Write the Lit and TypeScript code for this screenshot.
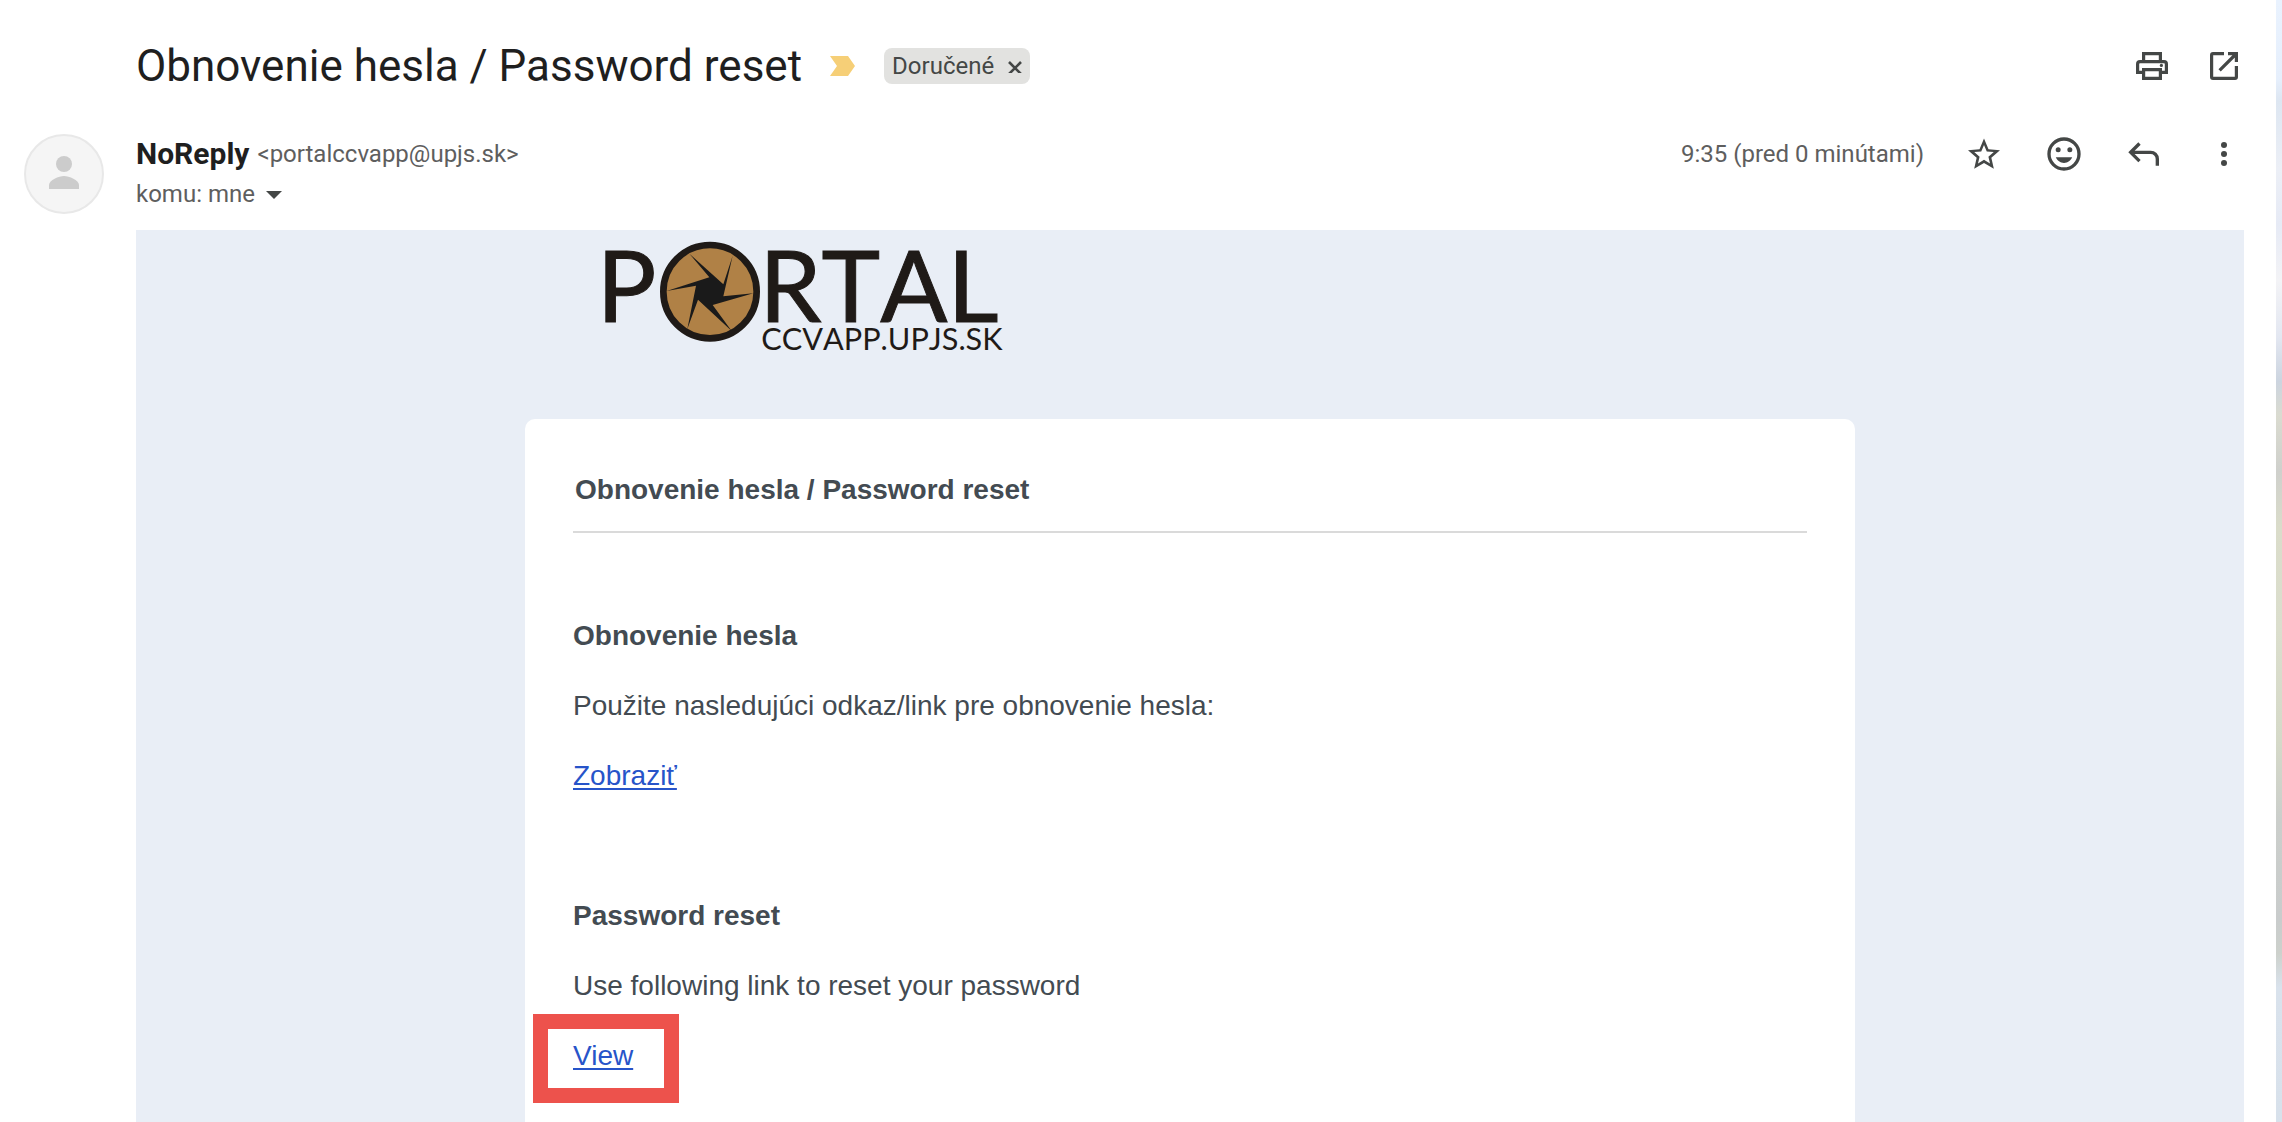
import { LitElement, html, css, svg } from "lit";
import { customElement } from "lit/decorators.js";

const icon = (body: unknown, box = 24) => html`
  <svg class="icon" viewBox="0 0 ${box} ${box}" aria-hidden="true">${body}</svg>
`;

const PRINT = svg`<g fill="none" stroke="currentColor" stroke-width="1.6"><path d="M5.8 7V3.8h8.4V7"/><path d="M5 13.2H2.8V9c0-.7.5-1.2 1.2-1.2h12c.7 0 1.2.5 1.2 1.2v4.2H15"/><path d="M5.8 11.8h8.4v4.4H5.8z"/></g><circle cx="14.7" cy="9.7" r=".8" fill="currentColor"/>`;
const OPEN = svg`<g fill="none" stroke="currentColor" stroke-width="1.6"><path d="M10 3.8H4.5a.7.7 0 0 0-.7.7v11c0 .4.3.7.7.7h11c.4 0 .7-.3.7-.7V10"/><path d="M12 3.8h4.2V8M16 4l-8.2 8.2"/></g>`;
const STAR = svg`<path fill="currentColor" d="M21.6 9.7l-6.9-.6L12 2.7 9.3 9.1l-6.9.6 5.2 4.5-1.5 6.7 5.9-3.5 5.9 3.5-1.5-6.7zM12 15.5l-3.6 2.2.95-4.1-3.2-2.8 4.2-.35L12 6.6l1.65 3.85 4.2.35-3.2 2.8.95 4.1z"/>`;
const SMILE = svg`<circle cx="12" cy="12" r="9" fill="none" stroke="currentColor" stroke-width="2"/><circle cx="8.5" cy="9.5" r="1.5" fill="currentColor"/><circle cx="15.5" cy="9.5" r="1.5" fill="currentColor"/><path fill="currentColor" d="M7.1 14h9.8c-.8 2-2.7 3.4-4.9 3.4S7.9 16 7.1 14z"/>`;
const REPLY = svg`<path fill="none" stroke="currentColor" stroke-width="2" d="M9.3 5.7 4 11l5.3 5.3M4.2 11H16c2.2 0 4 1.8 4 4v4"/>`;
const MORE = svg`<g fill="currentColor"><circle cx="12" cy="6.6" r="1.8"/><circle cx="12" cy="12" r="1.8"/><circle cx="12" cy="17.4" r="1.8"/></g>`;

@customElement("portal-logo")
export class PortalLogo extends LitElement {
  static styles = css`
    :host { display: block; }
    .logo { display: block; width: 406px; height: 117px; overflow: visible; }
    .word, .domain { font-family: Lato, sans-serif; font-kerning: none; fill: #1f1a17; }
    .word { font-size: 298px; stroke: #1f1a17; stroke-width: 3px; }
    .domain { font-size: 92px; }
  `;
  render() {
    return html`
      <svg class="logo" viewBox="60 39 1218 351" role="img" aria-label="PORTAL CCVAPP.UPJS.SK">
        <text class="word" x="50" y="291">P</text>
        <circle cx="390" cy="200" r="140" fill="#b08146" stroke="#1f1a17" stroke-width="20" />
        <polygon
          fill="#1a1a1a"
          points="328,86 430,178 458,92 430,214 520,205 398,240 455,318 354,224 322,312 348,182 260,198 388,157"
        />
        <text class="word" x="538" y="291">RTAL</text>
        <text class="domain" x="544" y="376">CCVAPP.UPJS.SK</text>
      </svg>
    `;
  }
}

@customElement("app-root")
export class AppRoot extends LitElement {
  static styles = css`
    :host {
      display: flex;
      height: 100vh;
      overflow: hidden;
      background: #fff;
      color: #1f1f1f;
      font-family: Roboto, "Liberation Sans", sans-serif;
    }
    * { box-sizing: border-box; }
    button {
      display: inline-flex;
      align-items: center;
      justify-content: center;
      padding: 0;
      border: 0;
      background: none;
      color: #444746;
      font: inherit;
      cursor: pointer;
    }
    .main {
      flex: 1;
      min-width: 0;
      display: flex;
      flex-direction: column;
      padding: 0 32px 0 24px;
    }
    .wallpaper {
      flex: 0 0 6px;
      background: linear-gradient(
        #e9f2fe 0%, #e6effc 7%, #dde6f1 9%, #eceff6 15%, #e6eaf5 20%, #f3f3f6 25%,
        #e3e7f1 30%, #ccd4df 34%, #dadbd0 37%, #cfd0cc 42%, #dadcca 47%, #dbdecd 56%,
        #d5d9c8 66%, #cbcecb 73%, #c9cccc 82%, #cdd1cc 85%, #d9e2ec 88%, #d8e1eb 100%
      );
    }
    .subject {
      display: flex;
      align-items: center;
      height: 132px;
      padding-left: 112px;
    }
    .subject-text { margin: 0; font-size: 44px; line-height: 56px; font-weight: 400; }
    .important { width: 26px; height: 20px; margin: 0 28px; color: #f6cf77; }
    .important-mark { width: 26px; height: 20px; }
    .label {
      display: flex;
      align-items: center;
      gap: 14px;
      height: 36px;
      padding: 0 8px;
      border-radius: 8px;
      background: #e2e2e0;
      color: #444746;
      font-size: 24px;
      line-height: 36px;
    }
    .label-close { width: 14px; height: 14px; }
    .label-x { width: 14px; height: 14px; }
    .page-tools { display: flex; gap: 32px; margin-left: auto; }
    .tool { width: 40px; height: 40px; }
    .icon { width: 40px; height: 40px; display: block; }
    .meta { display: flex; gap: 32px; padding: 2px 0 16px; }
    .avatar { width: 80px; height: 80px; flex: none; }
    .people { flex: 1; min-width: 0; font-size: 24px; line-height: 40px; color: #5e5e5e; }
    .line { display: flex; align-items: center; height: 40px; }
    .sender { margin: 0 8px 0 0; font-size: 30px; line-height: 40px; font-weight: 700; color: #1f1f1f; }
    .time { margin-left: auto; }
    .actions { display: flex; gap: 40px; margin-left: 40px; }
    .details { width: 40px; height: 40px; }
    .body {
      flex: 1;
      min-height: 0;
      margin-left: 112px;
      background: #e9eef6;
      color: #434b52;
      font-family: "Liberation Sans", Arial, sans-serif;
      font-size: 28px;
      line-height: 42px;
    }
    .letter {
      display: flex;
      flex-direction: column;
      height: 100%;
      width: 100%;
      max-width: 1330px;
      margin: 0 auto;
    }
    .brand { padding: 8px 0 64px 75px; }
    .card { flex: 1; padding: 48px 48px 0; border-radius: 10px 10px 0 0; background: #fff; }
    .card-title {
      margin: 0;
      padding: 2px 2px 20px;
      border-bottom: 2px solid #dadada;
      font-size: 28px;
      line-height: 42px;
      font-weight: 700;
    }
    .section { padding: 82px 0 16px; }
    .section + .section { padding-top: 54px; }
    .section-title, .text { margin: 0 0 28px; font-size: 28px; line-height: 42px; }
    .section-title { font-weight: 700; }
    .link {
      color: #2754c9;
      text-decoration: underline;
      text-decoration-thickness: 2px;
      text-underline-offset: 3px;
    }
    .marked { position: relative; }
    .marker {
      position: absolute;
      inset: -26px -46px -32px -40px;
      border: 15px solid #ed524c;
      pointer-events: none;
    }
  `;

  render() {
    return html`
      <main class="main">
        <header class="subject">
          <h1 class="subject-text">Obnovenie hesla / Password reset</h1>
          <button class="important" aria-label="Dôležité">
            <svg class="important-mark" viewBox="0 0 26 20"><path fill="currentColor" d="M0 0h18l7 10-7 10H0l7-10z" /></svg>
          </button>
          <div class="label">
            <span>Doručené</span>
            <button class="label-close" aria-label="Odstrániť štítok">
              <svg class="label-x" viewBox="0 0 14 14"><path d="M1 3l12 12M13 3L1 15" stroke="currentColor" stroke-width="2.6" /></svg>
            </button>
          </div>
          <div class="page-tools">
            <button class="tool" aria-label="Tlačiť">${icon(PRINT, 20)}</button>
            <button class="tool" aria-label="V novom okne">${icon(OPEN, 20)}</button>
          </div>
        </header>

        <section class="meta">
          <svg class="avatar" viewBox="0 0 80 80" aria-hidden="true">
            <circle cx="40" cy="40" r="39" fill="#f5f5f5" stroke="#e8e8e8" stroke-width="2" />
            <circle cx="40" cy="30" r="8" fill="#ccc" />
            <path fill="#ccc" d="M25 55v-4c0-5 10-9 15-9s15 4 15 9v4z" />
          </svg>
          <div class="people">
            <div class="line">
              <h2 class="sender">NoReply</h2>
              <span>&lt;portalccvapp@upjs.sk&gt;</span>
              <span class="time">9:35 (pred 0 minútami)</span>
              <div class="actions">
                <button class="tool" aria-label="Označiť hviezdičkou">${icon(STAR)}</button>
                <button class="tool" aria-label="Pridať reakciu">${icon(SMILE)}</button>
                <button class="tool" aria-label="Odpovedať">${icon(REPLY)}</button>
                <button class="tool" aria-label="Viac">${icon(MORE)}</button>
              </div>
            </div>
            <div class="line">
              <span>komu: mne</span>
              <button class="details" aria-label="Zobraziť podrobnosti">
                <svg class="icon" viewBox="0 0 40 40"><path fill="currentColor" d="M11 17h16l-8 8z" /></svg>
              </button>
            </div>
          </div>
        </section>

        <article class="body">
          <div class="letter">
            <portal-logo class="brand"></portal-logo>
            <div class="card">
              <h2 class="card-title">Obnovenie hesla / Password reset</h2>
              <section class="section">
                <h3 class="section-title">Obnovenie hesla</h3>
                <p class="text">Použite nasledujúci odkaz/link pre obnovenie hesla:</p>
                <p class="text"><a class="link" href="#zobrazit">Zobraziť</a></p>
              </section>
              <section class="section">
                <h3 class="section-title">Password reset</h3>
                <p class="text">Use following link to reset your password</p>
                <p class="text">
                  <span class="marked"><a class="link" href="#view">View</a><span class="marker"></span></span>
                </p>
              </section>
            </div>
          </div>
        </article>
      </main>
      <div class="wallpaper"></div>
    `;
  }
}
